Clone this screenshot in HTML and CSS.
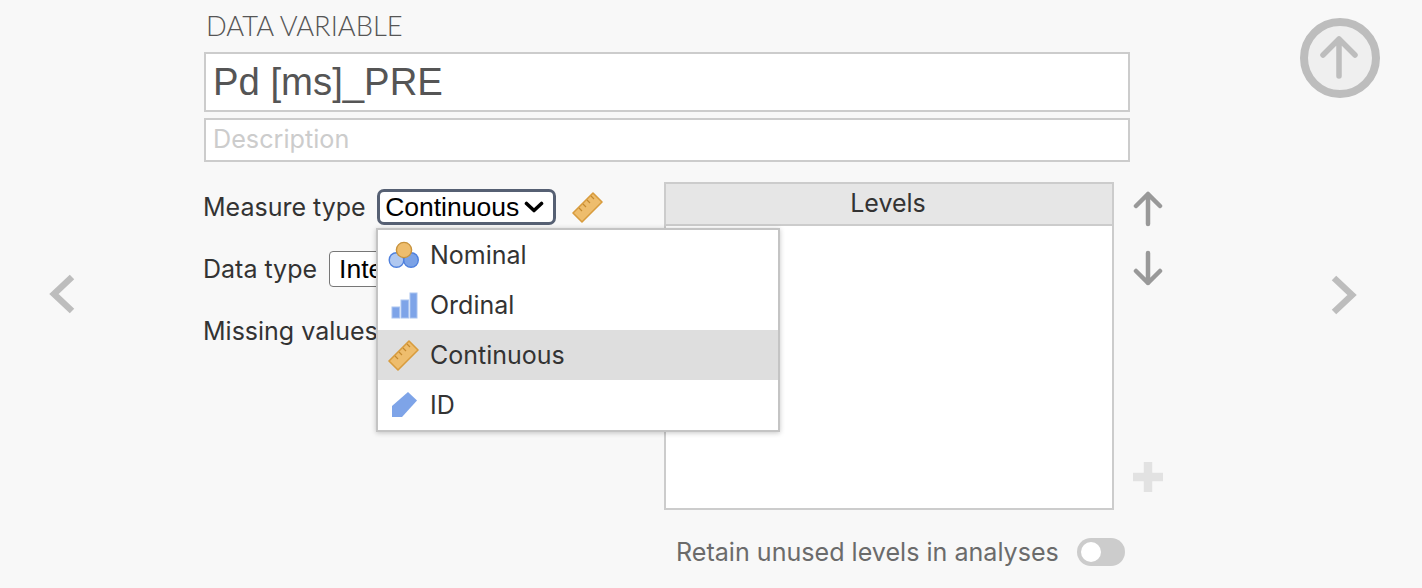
FILE: index.html
```html
<!DOCTYPE html>
<html lang="en">
<head>
<meta charset="utf-8">
<title>Data variable</title>
<link rel="stylesheet" href="styles.css">
</head>
<body>
<div class="page">
  <div class="side side-left">
    <svg class="chevron" width="28" height="40" viewBox="0 0 28 40"><path d="M24 3 L6 20 L24 37" fill="none" stroke="#bdbdbd" stroke-width="6.5"/></svg>
  </div>
  <main class="main">
    <div class="title">DATA VARIABLE</div>
    <div class="name-box">Pd [ms]_PRE</div>
    <div class="desc-box">Description</div>
    <div class="editor">
      <div class="fields">
        <div class="field field-measure">
          <span class="label">Measure type</span>
          <div class="select select-focus">Continuous
            <svg class="caret" width="20" height="12" viewBox="0 0 20 12"><path d="M2.5 2.5 L10 9.500 L17.500 2.500" fill="none" stroke="#000" stroke-width="3.600" stroke-linecap="round" stroke-linejoin="round"/></svg>
          </div>
          <svg class="ruler-big" width="32" height="32" viewBox="0 0 32 32"><use href="#ruler"/></svg>
        </div>
        <div class="field field-data">
          <span class="label">Data type</span>
          <div class="select select-plain">Integer</div>
        </div>
        <div class="field field-missing">
          <span class="label">Missing values</span>
        </div>
        <div class="menu">
          <div class="menu-item">
            <svg width="32" height="30" viewBox="-1 0 32 30"><circle cx="8.5" cy="20" r="7.3" fill="#b0c8f0" stroke="#4f80dd" stroke-width="1.4"/><circle cx="23" cy="20" r="7.3" fill="#7ba2e6" stroke="#4f80dd" stroke-width="1.4"/><circle cx="16" cy="10" r="7.6" fill="#eebd6d" stroke="#c8933c" stroke-width="1.4"/></svg>
            <span>Nominal</span>
          </div>
          <div class="menu-item">
            <svg width="32" height="30" viewBox="-1 0 32 30"><rect x="4" y="17" width="7.5" height="11" fill="#7ea4e8" stroke="#a9c3f0"/><rect x="13" y="10" width="7.5" height="18" fill="#7ea4e8" stroke="#a9c3f0"/><rect x="22" y="3" width="7" height="25" fill="#7ea4e8" stroke="#a9c3f0"/></svg>
            <span>Ordinal</span>
          </div>
          <div class="menu-item menu-item-active">
            <svg width="32" height="32" viewBox="0 0 32 32"><use href="#ruler"/></svg>
            <span>Continuous</span>
          </div>
          <div class="menu-item">
            <svg width="32" height="30" viewBox="-1 0 32 30"><path d="M4 16 L20 2 L29 10.500 L14 27 L4 27 Z" fill="#7ea4e8"/></svg>
            <span>ID</span>
          </div>
        </div>
      </div>
      <div class="levels-area">
        <div class="levels">
          <div class="levels-head">Levels</div>
          <div class="levels-body"></div>
        </div>
        <div class="levels-tools">
          <svg class="tool-up" width="32" height="36" viewBox="0 0 32 36"><path d="M16 33 V3 M4 15 L16 3 L28 15" fill="none" stroke="#999" stroke-width="4.500" stroke-linecap="round" stroke-linejoin="round"/></svg>
          <svg class="tool-down" width="32" height="36" viewBox="0 0 32 36"><path d="M16 3 V33 M4 21 L16 33 L28 21" fill="none" stroke="#999" stroke-width="4.500" stroke-linecap="round" stroke-linejoin="round"/></svg>
          <svg class="tool-plus" width="32" height="32" viewBox="0 0 32 32"><path d="M16 1 V31 M1 16 H31" fill="none" stroke="#e2e2e2" stroke-width="8.500"/></svg>
        </div>
      </div>
    </div>
    <div class="retain">
      <span>Retain unused levels in analyses</span>
      <span class="toggle"><span class="knob"></span></span>
    </div>
  </main>
  <div class="side side-right">
    <svg class="upload" width="80" height="80" viewBox="0 0 80 80"><circle cx="40" cy="40" r="36" fill="#efefef" stroke="#bdbdbd" stroke-width="8"/><path d="M39 58 V21 M23 37 L39 21 L55 37" fill="none" stroke="#bdbdbd" stroke-width="5.500" stroke-linecap="round" stroke-linejoin="round"/></svg>
    <svg class="chevron chevron-right" width="28" height="40" viewBox="0 0 28 40"><path d="M4 3 L22 20 L4 37" fill="none" stroke="#bdbdbd" stroke-width="6.5"/></svg>
  </div>
</div>
<svg class="defs" width="0" height="0"><defs><g id="ruler"><path d="M2 22 L22 2 L31 11 L11 31 Z" fill="#eebd6d" stroke="#d89c3e" stroke-width="1.6" stroke-linejoin="round"/><path d="M8 17 L11 20 M12 13 L15 16 M16 9 L19 12 M20 5 L23 8" stroke="#c48a30" stroke-width="1.2"/></g></defs></svg>
</body>
</html>
```
FILE: styles.css
```css
* { box-sizing: border-box; }
html, body { margin: 0; height: 100%; }
body {
  background: #f8f8f8;
  color: #333;
  font-family: Inter, "Liberation Sans", sans-serif;
  font-size: 25px;
  overflow: hidden;
}
.defs { position: absolute; }
.page {
  display: grid;
  grid-template-columns: 204px 926px 1fr;
  height: 588px;
}
.side-left {
  display: flex;
  align-items: center;
  justify-content: flex-end;
  padding-right: 128px;
}
.side-right {
  display: flex;
  flex-direction: column;
  padding: 18px 0 0 170px;
}
.chevron-right { margin: 177px 0 0 30px; }
.main { display: flex; flex-direction: column; }
.title {
  height: 52px;
  padding: 10px 0 0 2px;
  font-family: Lato, sans-serif;
  font-weight: 300;
  font-size: 27.300px;
  line-height: 32px;
  color: #555;
}
.name-box {
  height: 60px;
  padding: 0 7px;
  background: #fff;
  border: 2px solid #ccc;
  font-family: "Liberation Sans", sans-serif;
  font-size: 38.300px;
  line-height: 55px;
  color: #555;
}
.desc-box {
  height: 44px;
  margin-top: 6px;
  padding: 0 7px;
  background: #fff;
  border: 2px solid #ccc;
  font-size: 25.200px;
  line-height: 38px;
  color: #ccc;
}
.editor {
  display: flex;
  margin-top: 20px;
  height: 328px;
}
.fields {
  position: relative;
  flex: none;
  width: 460px;
  padding-top: 7px;
}
.label { margin-left: -1px; }
.field { display: flex; align-items: center; height: 36px; }
.field-data { margin-top: 26px; }
.field-missing { margin-top: 26px; }
.select {
  display: flex;
  align-items: center;
  height: 36px;
  background: #fff;
  color: #000;
  font-family: "Liberation Sans", sans-serif;
  font-size: 26.500px;
}
.select-focus {
  width: 179px;
  margin-left: 11px;
  padding-left: 5.500px;
  border: 3.500px solid #566073;
  border-radius: 7px;
}
.caret { margin-left: 5px; }
.ruler-big { margin-left: 15px; }
.select-plain {
  width: 150px;
  margin-left: 12px;
  padding-left: 9px;
  border: 1.500px solid #777;
  border-radius: 4px;
}
.menu {
  position: absolute;
  left: 172px;
  top: 46px;
  width: 404px;
  height: 204px;
  background: #fff;
  border: 2px solid #c4c4c4;
  box-shadow: 0 1px 5px rgba(0, 0, 0, .22);
}
.menu-item {
  display: flex;
  align-items: center;
  gap: 11px;
  height: 50px;
  padding-left: 9px;
}
.menu-item svg { flex: none; }
.menu-item-active { background: #dedede; }
.levels-area { display: flex; flex: none; }
.levels {
  display: flex;
  flex-direction: column;
  flex: none;
  width: 450px;
  height: 328px;
  border: 2px solid #ccc;
  background: #fff;
}
.levels-head {
  height: 42px;
  padding-right: 2px;
  background: #e6e6e6;
  border-bottom: 2px solid #ccc;
  text-align: center;
  line-height: 38px;
}
.levels-body { flex: 1; }
.levels-tools {
  display: flex;
  flex-direction: column;
  align-items: center;
  flex: none;
  width: 68px;
  padding-top: 9px;
}
.tool-down { margin-top: 23px; }
.tool-plus { margin-top: 175px; }
.retain {
  display: flex;
  align-items: center;
  margin: 28px 0 0 472px;
  height: 28px;
  font-size: 25.100px;
  color: #6b6b6b;
}
.toggle {
  display: flex;
  align-items: center;
  width: 48px;
  height: 28px;
  margin-left: 18px;
  padding-left: 4px;
  background: #ccc;
  border-radius: 14px;
}
.knob {
  width: 20px;
  height: 20px;
  background: #fff;
  border-radius: 50%;
}
```
